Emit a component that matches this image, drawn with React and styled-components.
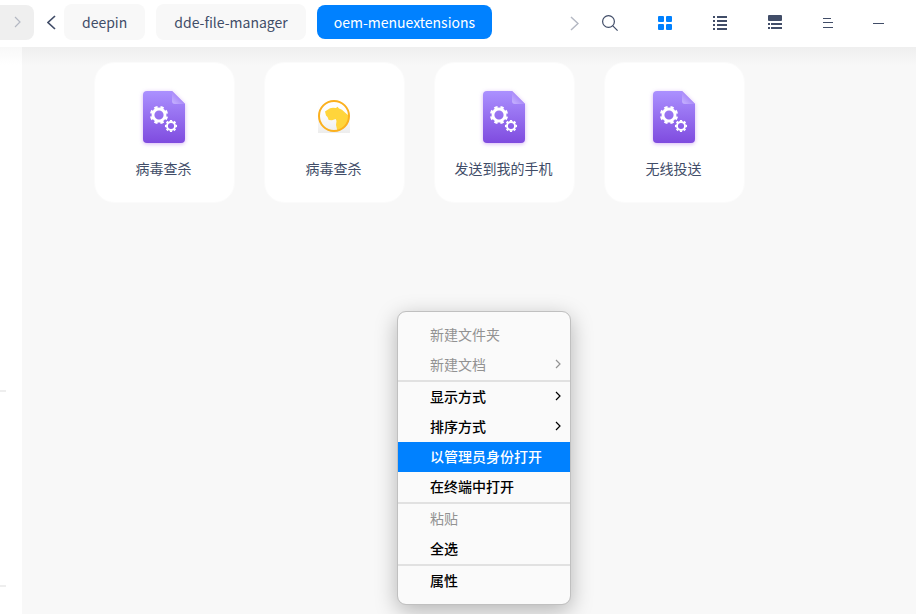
import styled, { createGlobalStyle } from "styled-components";

const GlobalStyle = createGlobalStyle`
    * {
        box-sizing: border-box;
    }
    body {
        margin: 0;
        font-family: "Noto Sans CJK SC", sans-serif;
        font-size: 14px;
        line-height: 20px;
        color: #414d68;
        background: #f8f8f8;
    }
    button {
        margin: 0;
        padding: 0;
        border: none;
        background: none;
        font: inherit;
        color: inherit;
    }
    svg {
        display: block;
    }
`
const Window = styled.div`
    display: flex;
    flex-direction: column;
    min-height: 100vh;
    position: relative;
`
const Header = styled.header`
    display: flex;
    align-items: center;
    height: 47px;
    padding: 0 12px 3px 0;
    background: #fff;
`
const NavEnd = styled.button`
    display: flex;
    align-items: center;
    justify-content: flex-end;
    width: 34px;
    height: 35px;
    padding-right: 13px;
    border-radius: 0 8px 8px 0;
    background: #efefef;
    color: #b4b8c3;
`
const BackButton = styled.button`
    display: flex;
    align-items: center;
    justify-content: center;
    width: 30px;
    height: 36px;
    padding-left: 4px;
`
const Crumbs = styled.nav`
    display: flex;
    align-items: center;
    gap: 11px;
    flex: 1;
`
const Crumb = styled.button`
    height: ${props => props.$active ? "34px" : "36px"};
    padding: ${props => props.$active ? "0 17px" : "0 18px"};
    border-radius: 8px;
    white-space: nowrap;
    color: ${props => props.$active ? "#fff" : "#414d68"};
    background: ${props => props.$active ? "#0081ff" : "#f8f8f8"};
`
const ToolButton = styled.button`
    display: flex;
    align-items: center;
    justify-content: center;
    width: ${props => props.$width || 55}px;
    height: 36px;
    padding-top: 2px;
    color: ${props => props.$color || "#414d68"};
`
const Body = styled.div`
    display: flex;
    flex: 1;
`
const Sidebar = styled.aside`
    display: flex;
    flex-direction: column;
    gap: 193px;
    width: 22px;
    padding-top: 343px;
    background: linear-gradient(#f8f8f8, #fff 18px);
`
const SidebarLine = styled.hr`
    width: 6px;
    height: 2px;
    margin: 0;
    border: none;
    background: #eee;
`
const Files = styled.main`
    display: flex;
    flex-wrap: wrap;
    align-content: flex-start;
    gap: 29px;
    flex: 1;
    padding: 15px 72px;
    background: linear-gradient(#efefef, #f8f8f8 18px);
`
const File = styled.button`
    display: flex;
    flex-direction: column;
    align-items: center;
    gap: 15px;
    width: 141px;
    height: 141px;
    padding: 28px 2px 0 0;
    border: 1px solid #fbfbfb;
    border-radius: 20px;
    background: #fff;
`
const FileIcon = styled.span`
    display: flex;
    align-items: center;
    height: 52px;

    svg {
        overflow: visible;
    }
`
const Menu = styled.div`
    position: absolute;
    top: 311px;
    left: 397px;
    width: 174px;
    padding: 8px 0;
    border: 1px solid #c0c0c0;
    border-radius: 9px;
    background: #fafafa;
    background-clip: padding-box;
    box-shadow: 0 6px 22px rgba(0, 0, 0, 0.28);
`
const MenuItem = styled.button`
    display: flex;
    align-items: center;
    justify-content: space-between;
    width: 100%;
    height: 30px;
    padding: 0 9px 2px 32px;
    font-weight: 500;
    color: ${props => props.$active ? "#fff" : "#000"};
    background: ${props => props.$active ? "#0081ff" : "transparent"};

    &:disabled {
        font-weight: 400;
        color: #929292;
    }
`
const MenuLine = styled.hr`
    height: 2px;
    margin: 0;
    border: none;
    background: #e1e1e1;
`

function Chevron({ left, width = 8, height = 14, stroke = 1.5 }){
    return (
        <svg width={width} height={height} viewBox={`0 0 ${width} ${height}`} fill="none" stroke="currentColor" strokeWidth={stroke}>
            <path d={left
                ? `M${width - 1} 1L1 ${height / 2}L${width - 1} ${height - 1}`
                : `M1 1L${width - 1} ${height / 2}L1 ${height - 1}`} />
        </svg>
    );
}

function Gear({ x, y, r, turn }){
    return (
        <g transform={`translate(${x} ${y}) rotate(${turn})`} fill="none" stroke="#fff">
            <circle r={r * 0.67} strokeWidth={r * 0.32} />
            <circle r={r * 0.88} strokeWidth={r * 0.26} pathLength="16" strokeDasharray="1.1 0.9" strokeDashoffset="0.55" />
        </g>
    );
}

const LibrarySvg = styled.svg`
    filter: drop-shadow(0 1px 2px rgba(150, 70, 230, 0.4));
`

function LibraryIcon(){
    return (
        <LibrarySvg width="42" height="52" viewBox="0 0 42 52">
            <defs>
                <linearGradient id="sheet" x1="0" y1="0" x2="0" y2="1">
                    <stop offset="0" stopColor="#ab91ff" />
                    <stop offset="1" stopColor="#7f4bdf" />
                </linearGradient>
                <linearGradient id="fold" x1="1" y1="0" x2="0" y2="1">
                    <stop offset="0.4" stopColor="#a583f8" />
                    <stop offset="1" stopColor="#c8b6ff" />
                </linearGradient>
            </defs>
            <path d="M4 0H29L42 13V48a4 4 0 0 1-4 4H4a4 4 0 0 1-4-4V4a4 4 0 0 1 4-4z" fill="url(#sheet)" />
            <path d="M29 0L42 13H32a3 3 0 0 1-3-3z" fill="url(#fold)" />
            <Gear x={16} y={24} r={9} turn={22.5} />
            <Gear x={28} y={35} r={6} turn={0} />
        </LibrarySvg>
    );
}

function AntivirusIcon(){
    return (
        <svg width="32" height="34" viewBox="0 0 32 34">
            <defs>
                <linearGradient id="plate" x1="0" y1="0" x2="0" y2="1">
                    <stop offset="0" stopColor="#fff" />
                    <stop offset="0.4" stopColor="#fdfdfd" />
                    <stop offset="1" stopColor="#ededed" />
                </linearGradient>
            </defs>
            <path d="M0 0H32V33H0z" fill="url(#plate)" />
            <path d="M7 11.5L8.500 10.500L12 8.300L15 7.800L18 8L19.500 6.800L21 8.600L24 9.800L27 12.500L30.500 15.500L30.500 20L27 27L19.300 30.500L18 25L18.500 21L17.700 19L14 20.200L10.700 20L9.500 17L8 15.500Z" fill="#ffd53b" />
            <circle cx="16" cy="16" r="15" fill="none" stroke="#fbb01e" strokeWidth="2" />
        </svg>
    );
}

const files = [
    { id: 1, name: "病毒查杀", icon: LibraryIcon },
    { id: 2, name: "病毒查杀", icon: AntivirusIcon },
    { id: 3, name: "发送到我的手机", icon: LibraryIcon },
    { id: 4, name: "无线投送", icon: LibraryIcon },
]

const menuGroups = [
    [
        { name: "新建文件夹", disabled: true },
        { name: "新建文档", disabled: true, submenu: true },
    ],
    [
        { name: "显示方式", submenu: true },
        { name: "排序方式", submenu: true },
        { name: "以管理员身份打开", active: true },
        { name: "在终端中打开" },
    ],
    [
        { name: "粘贴", disabled: true },
        { name: "全选" },
    ],
    [
        { name: "属性" },
    ],
]

function Toolbar(){
    return (
        <>
            <ToolButton $width={16} $color="#b4b8c3"><Chevron width={9} height={15} /></ToolButton>
            <ToolButton>
                <svg width="16" height="16" viewBox="0 0 16 16" fill="none" stroke="currentColor" strokeWidth="1.2">
                    <circle cx="6.500" cy="6.500" r="5.900" />
                    <path d="M10.800 10.800L15.600 15.600" />
                </svg>
            </ToolButton>
            <ToolButton $color="#0081ff">
                <svg width="14" height="14" viewBox="0 0 14 14" fill="currentColor">
                    <rect width="6" height="6" rx="1" />
                    <rect x="8" width="6" height="6" rx="1" />
                    <rect y="8" width="6" height="6" rx="1" />
                    <rect x="8" y="8" width="6" height="6" rx="1" />
                </svg>
            </ToolButton>
            <ToolButton>
                <svg width="14" height="14" viewBox="0 0 14 14" fill="currentColor">
                    <path d="M0 0h2v2H0zM4 0h10v2H4zM0 4h2v2H0zM4 4h10v2H4zM0 8h2v2H0zM4 8h10v2H4zM0 12h2v2H0zM4 12h10v2H4z" />
                </svg>
            </ToolButton>
            <ToolButton>
                <svg width="14" height="16" viewBox="0 0 14 16" fill="currentColor">
                    <rect width="14" height="6" rx="1" />
                    <path d="M0 8h2v2H0zM3 8h11v2H3zM0 12h2v2H0zM3 12h11v2H3z" />
                </svg>
            </ToolButton>
            <ToolButton $width={51}>
                <svg width="10" height="10" viewBox="0 0 10 10" fill="currentColor">
                    <path d="M0 0h8v1H0zM0 4h10v1H0zM0 9h10v1H0z" />
                </svg>
            </ToolButton>
            <ToolButton $width={51}>
                <svg width="11" height="1" viewBox="0 0 11 1" fill="currentColor">
                    <path d="M0 0h11v1H0z" />
                </svg>
            </ToolButton>
        </>
    );
}

function ContextMenu(){
    return (
        <Menu>
            {menuGroups.map((group, index) => (
                <div key={index}>
                    {index > 0 && <MenuLine />}
                    {group.map(item => (
                        <MenuItem key={item.name} $active={item.active} disabled={item.disabled}>
                            {item.name}
                            {item.submenu && <Chevron width={6} height={10} stroke={1.2} />}
                        </MenuItem>
                    ))}
                </div>
            ))}
        </Menu>
    );
}

function App(){
    return (
        <Window>
            <GlobalStyle />
            <Header>
                <NavEnd><Chevron width={7} height={12} stroke={1.2} /></NavEnd>
                <BackButton><Chevron left width={9} height={15} stroke={1.7} /></BackButton>
                <Crumbs>
                    <Crumb>deepin</Crumb>
                    <Crumb>dde-file-manager</Crumb>
                    <Crumb $active>oem-menuextensions</Crumb>
                </Crumbs>
                <Toolbar />
            </Header>
            <Body>
                <Sidebar>
                    <SidebarLine />
                    <SidebarLine />
                </Sidebar>
                <Files>
                    {files.map(file => (
                        <File key={file.id}>
                            <FileIcon><file.icon /></FileIcon>
                            {file.name}
                        </File>
                    ))}
                </Files>
            </Body>
            <ContextMenu />
        </Window>
    );
}

export default App;
